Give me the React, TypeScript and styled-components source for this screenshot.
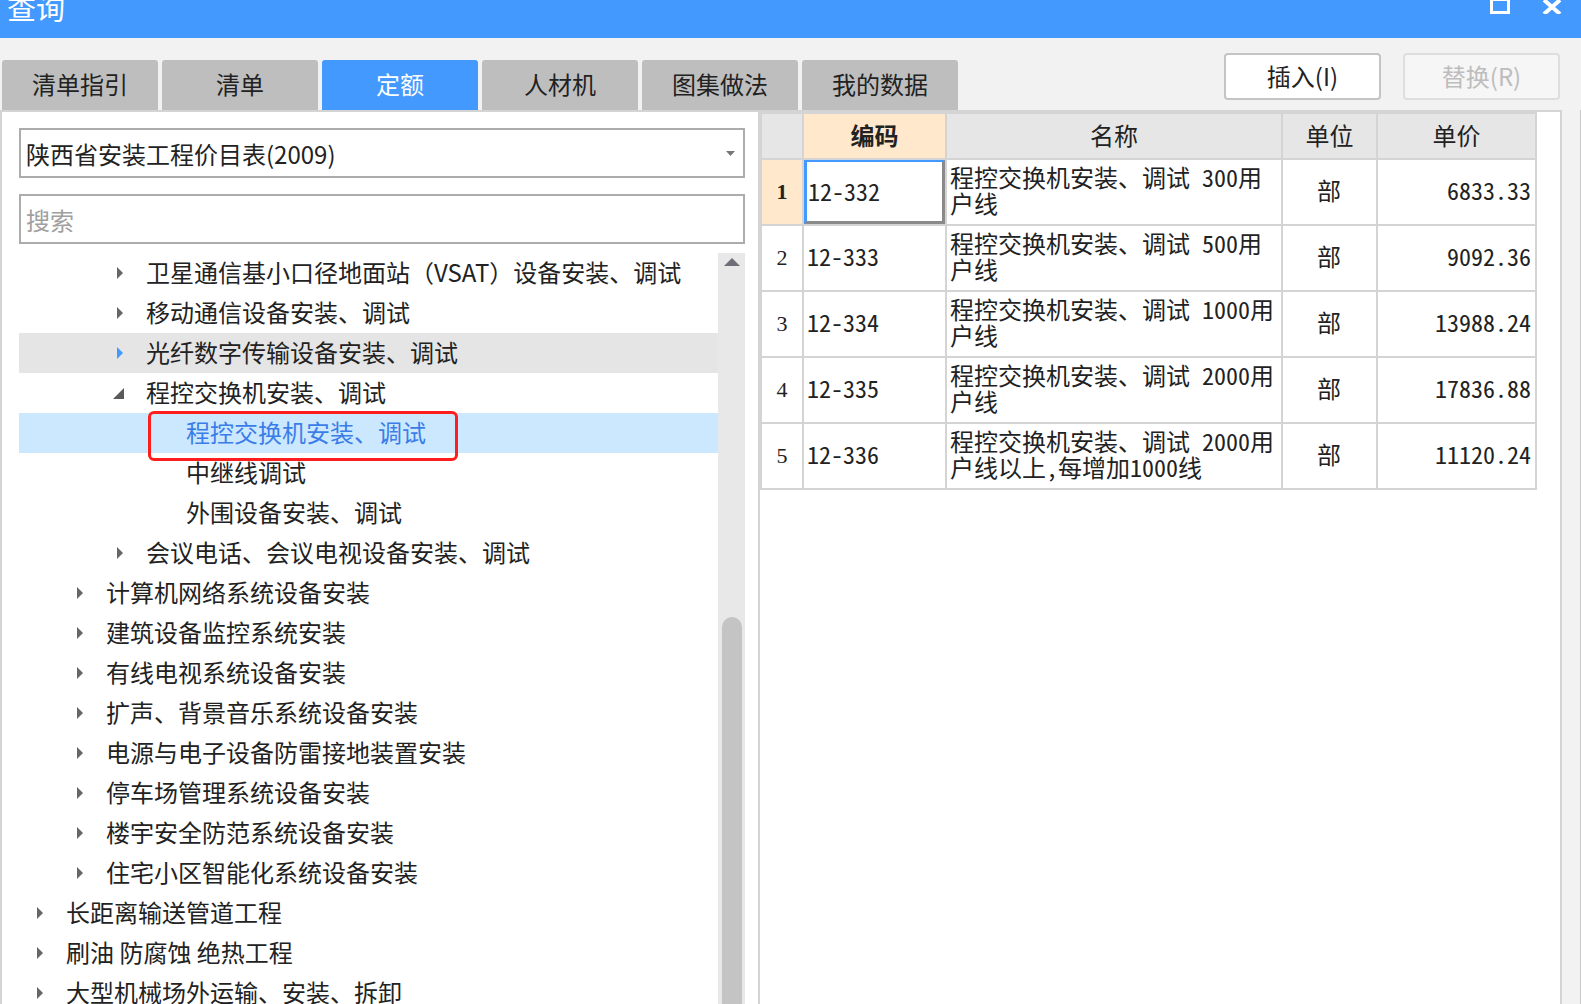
import React from "react";
import styled, { createGlobalStyle } from "styled-components";

const Global = createGlobalStyle`
  html, body { margin: 0; padding: 0; background: #f2f2f2; overflow: hidden; }
  body { font-family: "Noto Sans CJK SC", "Noto Sans", sans-serif; color: #222; }
  * { box-sizing: border-box; }
`;

const Window = styled.div`
  width: 1581px;
  height: 1004px;
  display: flex;
  flex-direction: column;
  overflow: hidden;
  background: #f2f2f2;
`;

const TitleBar = styled.div`
  height: 38px;
  flex: none;
  background: #4499ff;
  display: flex;
  align-items: flex-start;
  overflow: hidden;
  padding: 0 19px 0 7px;
`;

const TitleText = styled.div`
  flex: 1;
  color: #fff;
  font-size: 29px;
  line-height: 30px;
  margin-top: -8px;
`;

const MaxIcon = styled.div`
  width: 20px;
  height: 15px;
  border: 3px solid #fff;
  border-top-width: 2px;
  margin-top: -1px;
  margin-right: 32px;
`;

const CloseIcon = styled.svg`
  width: 20px;
  height: 14px;
  display: block;
`;

const Toolbar = styled.div`
  height: 72px;
  flex: none;
  display: flex;
  padding: 0 21px 0 2px;
`;

const Tabs = styled.div`
  display: flex;
  gap: 4px;
  align-self: flex-end;
`;

const Tab = styled.div<{ $active?: boolean }>`
  width: 156px;
  height: 50px;
  display: flex;
  align-items: center;
  justify-content: center;
  padding-bottom: 3px;
  font-size: 24px;
  border-radius: 3px 3px 0 0;
  background: ${(p) => (p.$active ? "#4499ff" : "#bebebe")};
  color: ${(p) => (p.$active ? "#fff" : "#222")};
`;

const Actions = styled.div`
  margin-left: auto;
  margin-top: 15px;
  display: flex;
  gap: 22px;
  align-self: flex-start;
`;

const Button = styled.div<{ $disabled?: boolean }>`
  width: 157px;
  height: 47px;
  display: flex;
  align-items: center;
  justify-content: center;
  padding-bottom: 2px;
  font-size: 24px;
  border-radius: 4px;
  background: ${(p) => (p.$disabled ? "#f6f6f6" : "#fff")};
  border: 2px solid ${(p) => (p.$disabled ? "#dedede" : "#c4c4c4")};
  color: ${(p) => (p.$disabled ? "#bdbdbd" : "#222")};
`;

const Body = styled.div`
  flex: 1;
  min-height: 0;
  display: flex;
  padding-right: 18px;
  border-right: 1px solid #c8c8c8;
`;

const LeftPanel = styled.div`
  width: 760px;
  flex: none;
  background: #fff;
  border-top: 2px solid #d4d4d4;
  border-left: 2px solid #d4d4d4;
  border-right: 2px solid #d4d4d4;
  padding: 16px 13px 0 17px;
  display: flex;
  flex-direction: column;
  overflow: hidden;
`;

const Field = styled.div<{ $placeholder?: boolean }>`
  height: 50px;
  flex: none;
  border: 2px solid #acacac;
  display: flex;
  align-items: center;
  padding: 0 8px 0 5px;
  font-size: 24px;
  color: ${(p) => (p.$placeholder ? "#a0a0a0" : "#222")};
  & + & {
    margin-top: 16px;
  }
`;

const FieldText = styled.span`
  flex: 1;
`;

const TreeArea = styled.div`
  flex: 1;
  min-height: 0;
  margin-top: 9px;
  display: flex;
`;

const TreeList = styled.div`
  flex: 1;
  min-width: 0;
`;

const Row = styled.div<{ $level: number; $state?: "hover" | "selected" }>`
  position: relative;
  height: 40px;
  display: flex;
  align-items: center;
  white-space: nowrap;
  font-size: 24px;
  padding-bottom: 3px;
  padding-left: ${(p) => 17 + p.$level * 40}px;
  background: ${(p) =>
    p.$state === "hover" ? "#e5e5e5" : p.$state === "selected" ? "#cce8ff" : "transparent"};
  color: ${(p) => (p.$state === "selected" ? "#3b7de8" : "#222")};
`;

const ArrowSlot = styled.span`
  width: 30px;
  flex: none;
  display: flex;
  align-items: center;
  margin-top: 3px;
`;

const Annotation = styled.div`
  position: absolute;
  left: 129px;
  top: -2px;
  width: 310px;
  height: 50px;
  border: 3px solid #ff1e1e;
  border-radius: 6px;
  pointer-events: none;
`;

const Scrollbar = styled.div`
  width: 27px;
  flex: none;
  background: #e8e8e8;
  display: flex;
  flex-direction: column;
  align-items: center;
  overflow: hidden;
`;

const ScrollUp = styled.svg`
  width: 16px;
  height: 8px;
  margin-top: 5px;
  flex: none;
`;

const Thumb = styled.div`
  width: 20px;
  height: 420px;
  flex: none;
  margin-top: 351px;
  margin-left: 1px;
  border-radius: 10px;
  background: #c4c4c4;
`;

const RightPanel = styled.div`
  flex: 1;
  background: #fff;
  border-top: 2px solid #d4d4d4;
  border-right: 2px solid #d4d4d4;
`;

const Grid = styled.div`
  display: grid;
  width: fit-content;
  grid-template-columns: 40px 141px 334px 93px 157px;
  grid-template-rows: 44px repeat(5, 64px);
  gap: 2px;
  padding: 2px;
  background: #d4d4d4;
  font-family: "Noto Sans Mono CJK SC", "Noto Sans CJK SC", monospace;
  font-size: 24px;
`;

const HeadCell = styled.div<{ $accent?: boolean }>`
  display: flex;
  align-items: center;
  justify-content: center;
  padding-bottom: 3px;
  font-family: "Noto Sans CJK SC", sans-serif;
  font-size: 24px;
  background: ${(p) => (p.$accent ? "#ffe8cc" : "#e6e6e6")};
  font-weight: ${(p) => (p.$accent ? 700 : 400)};
`;

const NumCell = styled.div<{ $current?: boolean }>`
  display: flex;
  align-items: center;
  justify-content: center;
  background: ${(p) => (p.$current ? "#ffe8cc" : "#fff")};
  font-weight: ${(p) => (p.$current ? 700 : 400)};
  font-family: "Liberation Serif", serif;
  font-size: 22px;
`;

const Cell = styled.div<{ $align?: "left" | "center" | "right"; $focus?: boolean }>`
  display: flex;
  flex-direction: column;
  justify-content: center;
  background: #fff;
  line-height: 26px;
  padding: 0 4px 5px 3px;
  align-items: ${(p) =>
    p.$align === "center" ? "center" : p.$align === "right" ? "flex-end" : "flex-start"};
  ${(p) =>
    p.$focus
      ? `border-left: 3px solid #4499ff; border-top: 2px solid #4499ff; border-right: 3px solid #8a8a8a; border-bottom: 3px solid #8a8a8a; padding-left: 1px; padding-bottom: 2px;`
      : ""}
`;

const NameLine = styled.span`
  white-space: nowrap;
`;

const RightArrow = ({ color }: { color: string }) => (
  <svg width="8" height="12" viewBox="0 0 8 12">
    <polygon points="1,0 7,6 1,12" fill={color} />
  </svg>
);

const OpenArrow = () => (
  <svg width="11" height="11" viewBox="0 0 11 11" style={{ marginLeft: -3 }}>
    <polygon points="0,11 11,11 11,0" fill="#5a5a5a" />
  </svg>
);

type TreeItem = {
  text: string;
  level: number;
  kind: "closed" | "open" | "leaf";
  state?: "hover" | "selected";
};

const tree: TreeItem[] = [
  { text: "卫星通信基小口径地面站（VSAT）设备安装、调试", level: 2, kind: "closed" },
  { text: "移动通信设备安装、调试", level: 2, kind: "closed" },
  { text: "光纤数字传输设备安装、调试", level: 2, kind: "closed", state: "hover" },
  { text: "程控交换机安装、调试", level: 2, kind: "open" },
  { text: "程控交换机安装、调试", level: 3, kind: "leaf", state: "selected" },
  { text: "中继线调试", level: 3, kind: "leaf" },
  { text: "外围设备安装、调试", level: 3, kind: "leaf" },
  { text: "会议电话、会议电视设备安装、调试", level: 2, kind: "closed" },
  { text: "计算机网络系统设备安装", level: 1, kind: "closed" },
  { text: "建筑设备监控系统安装", level: 1, kind: "closed" },
  { text: "有线电视系统设备安装", level: 1, kind: "closed" },
  { text: "扩声、背景音乐系统设备安装", level: 1, kind: "closed" },
  { text: "电源与电子设备防雷接地装置安装", level: 1, kind: "closed" },
  { text: "停车场管理系统设备安装", level: 1, kind: "closed" },
  { text: "楼宇安全防范系统设备安装", level: 1, kind: "closed" },
  { text: "住宅小区智能化系统设备安装", level: 1, kind: "closed" },
  { text: "长距离输送管道工程", level: 0, kind: "closed" },
  { text: "刷油 防腐蚀 绝热工程", level: 0, kind: "closed" },
  { text: "大型机械场外运输、安装、拆卸", level: 0, kind: "closed" },
];

const rows = [
  { code: "12-332", name: ["程控交换机安装、调试 300用", "户线"], unit: "部", price: "6833.33" },
  { code: "12-333", name: ["程控交换机安装、调试 500用", "户线"], unit: "部", price: "9092.36" },
  { code: "12-334", name: ["程控交换机安装、调试 1000用", "户线"], unit: "部", price: "13988.24" },
  { code: "12-335", name: ["程控交换机安装、调试 2000用", "户线"], unit: "部", price: "17836.88" },
  { code: "12-336", name: ["程控交换机安装、调试 2000用", "户线以上,每增加1000线"], unit: "部", price: "11120.24" },
];

const tabs = ["清单指引", "清单", "定额", "人材机", "图集做法", "我的数据"];

export default function App() {
  return (
    <>
      <Global />
      <Window>
        <TitleBar>
          <TitleText>查询</TitleText>
          <MaxIcon />
          <CloseIcon viewBox="0 0 20 14">
            <path d="M2 0 L18 14 M18 0 L2 14" stroke="#fff" strokeWidth="4" />
          </CloseIcon>
        </TitleBar>
        <Toolbar>
          <Tabs>
            {tabs.map((t) => (
              <Tab key={t} $active={t === "定额"}>
                {t}
              </Tab>
            ))}
          </Tabs>
          <Actions>
            <Button>插入(I)</Button>
            <Button $disabled>替换(R)</Button>
          </Actions>
        </Toolbar>
        <Body>
          <LeftPanel>
            <Field>
              <FieldText>陕西省安装工程价目表(2009)</FieldText>
              <svg width="9" height="5" viewBox="0 0 9 5">
                <polygon points="0,0 9,0 4.5,5" fill="#777" />
              </svg>
            </Field>
            <Field $placeholder>
              <FieldText>搜索</FieldText>
            </Field>
            <TreeArea>
              <TreeList>
                {tree.map((item, i) => (
                  <Row key={i} $level={item.level} $state={item.state}>
                    <ArrowSlot>
                      {item.kind === "closed" && (
                        <RightArrow color={item.state === "hover" ? "#4499ff" : "#666"} />
                      )}
                      {item.kind === "open" && <OpenArrow />}
                    </ArrowSlot>
                    {item.text}
                    {item.state === "selected" && <Annotation />}
                  </Row>
                ))}
              </TreeList>
              <Scrollbar>
                <ScrollUp viewBox="0 0 16 8">
                  <polygon points="8,0 16,8 0,8" fill="#6e6e78" />
                </ScrollUp>
                <Thumb />
              </Scrollbar>
            </TreeArea>
          </LeftPanel>
          <RightPanel>
            <Grid>
              <HeadCell />
              <HeadCell $accent>编码</HeadCell>
              <HeadCell>名称</HeadCell>
              <HeadCell>单位</HeadCell>
              <HeadCell>单价</HeadCell>
              {rows.map((r, i) => (
                <React.Fragment key={r.code}>
                  <NumCell $current={i === 0}>{i + 1}</NumCell>
                  <Cell $focus={i === 0}>{r.code}</Cell>
                  <Cell>
                    {r.name.map((l, j) => (
                      <NameLine key={j}>{l}</NameLine>
                    ))}
                  </Cell>
                  <Cell $align="center">{r.unit}</Cell>
                  <Cell $align="right">{r.price}</Cell>
                </React.Fragment>
              ))}
            </Grid>
          </RightPanel>
        </Body>
      </Window>
    </>
  );
}
